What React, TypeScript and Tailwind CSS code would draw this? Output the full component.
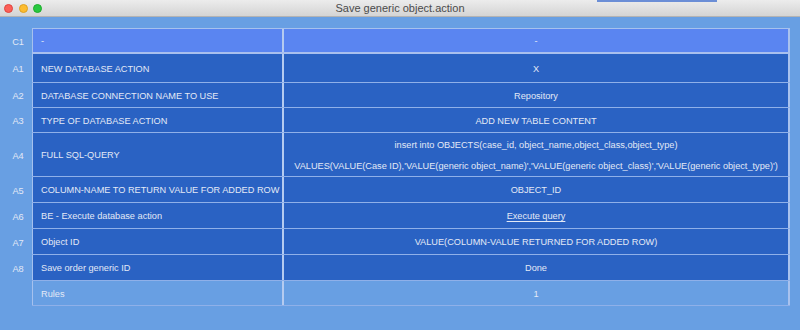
import React from 'react';

type Row = {
  id: string;
  label: string;
  value: React.ReactNode;
  h: string;
  kind?: 'head' | 'foot';
};

const rows: Row[] = [
  { id: 'C1', label: '-', value: '-', h: 'h-[26px]', kind: 'head' },
  { id: 'A1', label: 'NEW DATABASE ACTION', value: 'X', h: 'h-[29px]' },
  { id: 'A2', label: 'DATABASE CONNECTION NAME TO USE', value: 'Repository', h: 'h-[25px]' },
  { id: 'A3', label: 'TYPE OF DATABASE ACTION', value: 'ADD NEW TABLE CONTENT', h: 'h-[25px]' },
  {
    id: 'A4',
    label: 'FULL SQL-QUERY',
    value: (
      <div className="flex flex-col items-center gap-[7px]">
        <span>insert into OBJECTS(case_id, object_name,object_class,object_type)</span>
        <span>
          VALUES(VALUE(Case ID),'VALUE(generic object_name)','VALUE(generic object_class)','VALUE(generic object_type)')
        </span>
      </div>
    ),
    h: 'h-[44px]',
  },
  { id: 'A5', label: 'COLUMN-NAME TO RETURN VALUE FOR ADDED ROW', value: 'OBJECT_ID', h: 'h-[26px]' },
  {
    id: 'A6',
    label: 'BE - Execute database action',
    value: <span className="underline underline-offset-2">Execute query</span>,
    h: 'h-[26px]',
  },
  { id: 'A7', label: 'Object ID', value: 'VALUE(COLUMN-VALUE RETURNED FOR ADDED ROW)', h: 'h-[26px]' },
  { id: 'A8', label: 'Save order generic ID', value: 'Done', h: 'h-[26px]' },
  { id: '', label: 'Rules', value: '1', h: 'h-[25px]', kind: 'foot' },
];

export default function App() {
  return (
    <div
      className="relative w-[800px] h-[330px] overflow-hidden bg-[#689fe3] text-[9.2px] text-[#e3e9f6]"
      style={{ fontFamily: '"Liberation Sans", Arial, sans-serif' }}
    >
      {/* title bar */}
      <div className="relative flex items-center h-[17px] bg-gradient-to-b from-[#ececec] to-[#d4d4d4] border-b border-[#b3b3b3]">
        <div className="flex items-center gap-[5.5px] pl-[4px]">
          <span className="w-[9px] h-[9px] rounded-full bg-[#fc5f57] border border-[#e0443e]" />
          <span className="w-[9px] h-[9px] rounded-full bg-[#fdbc2e] border border-[#dea123]" />
          <span className="w-[9px] h-[9px] rounded-full bg-[#28c840] border border-[#1dad2b]" />
        </div>
        <div className="absolute inset-0 flex items-center justify-center text-[11px] text-[#4b4b4b]">
          Save generic object.action
        </div>
        <div className="absolute top-0 left-[597px] w-[120px] h-[2px] bg-[#6b8ed6]" />
      </div>

      {/* table */}
      <div className="flex flex-col pt-[11px] pr-[10px]">
        {rows.map((r, i) => {
          const bg =
            r.kind === 'head' ? 'bg-[#5a85f1]' : r.kind === 'foot' ? 'bg-[#689fe3]' : 'bg-[#2a62c3]';
          const top = i === 0 ? 'border-t border-t-[#a6c1ee]' : '';
          const bottom =
            r.kind === 'head'
              ? 'border-b-2 border-b-[#a9c0ee]'
              : 'border-b border-b-[#8fb0e9]';
          return (
            <div key={i} className={`flex ${r.h}`}>
              <div className="w-[32px] shrink-0 flex items-center justify-center pl-[4px] pt-[3px]">{r.id}</div>
              <div className={`flex flex-1 ${bg} ${top} ${bottom}`}>
                <div className="w-[252px] shrink-0 flex items-center pl-[8px] pt-[3px] border-l border-l-[#a6c1ee] border-r-2 border-r-[#b5cbf0] whitespace-nowrap">
                  {r.label}
                </div>
                <div className="flex-1 flex items-center justify-center pt-[3px] border-r-2 border-r-[#a9c2ee] whitespace-nowrap">
                  {r.value}
                </div>
              </div>
            </div>
          );
        })}
      </div>
    </div>
  );
}
